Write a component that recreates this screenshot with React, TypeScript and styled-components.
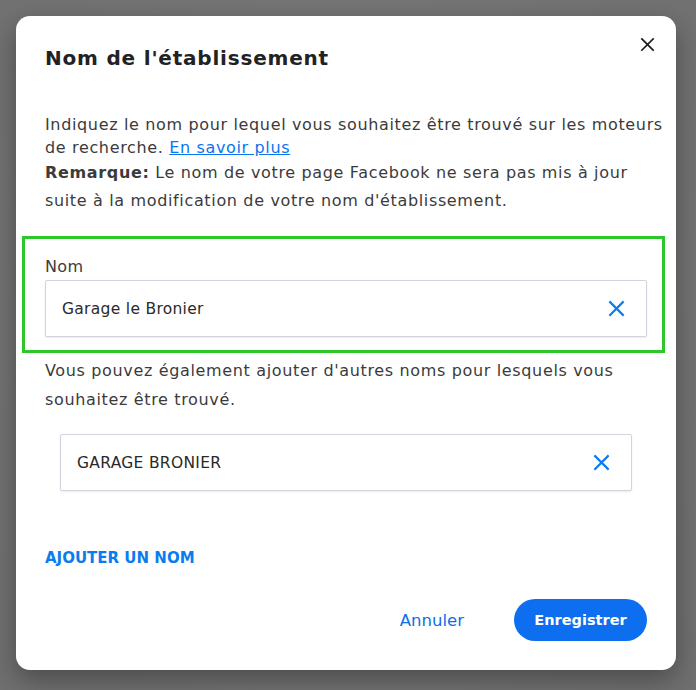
import React from 'react'
import styled, { createGlobalStyle } from 'styled-components'

const GlobalStyle = createGlobalStyle`
  html, body {
    margin: 0;
    padding: 0;
    background: #767676;
    font-family: "DejaVu Sans", "Open Sans", sans-serif;
  }
  * { box-sizing: border-box; }
`

const Overlay = styled.div`
  width: 696px;
  height: 690px;
  padding: 16px;
  background: radial-gradient(ellipse at 50% 40%, #7a7a7a 0%, #707070 100%);
`

const Dialog = styled.div`
  width: 660px;
  height: 654px;
  background: #fff;
  border-radius: 14px;
  box-shadow: 0 10px 28px rgba(0, 0, 0, 0.35);
  padding: 27px 29px 29px;
  display: flex;
  flex-direction: column;
`

const Header = styled.div`
  display: flex;
  align-items: center;
  justify-content: space-between;
  height: 30px;
`

const Title = styled.h2`
  margin: 0;
  font-size: 20px;
  font-weight: 700;
  color: #222;
  letter-spacing: 0.8px;
`

const IconButton = styled.button`
  border: none;
  background: none;
  padding: 0;
  margin-right: -12px;
  margin-top: -28px;
  width: 24px;
  height: 24px;
  display: flex;
  align-items: center;
  justify-content: center;
  cursor: pointer;
`

const Text = styled.p<{ $lh: number; $mt?: number }>`
  margin: ${(p) => p.$mt ?? 0}px 0 0;
  font-size: 16px;
  letter-spacing: 0.65px;
  line-height: ${(p) => p.$lh}px;
  color: #3b3b3b;
  white-space: nowrap;
`

const Link = styled.a`
  color: #0a74ee;
  text-decoration: underline;
`

const Highlight = styled.section`
  margin: 21px -18px 0 -23px;
  padding: 18px 15px 13px 20px;
  border: 3px solid #2bc72b;
`

const Label = styled.div`
  font-size: 16px;
  letter-spacing: 0.4px;
  line-height: 20px;
  color: #3b3b3b;
  margin-bottom: 3px;
`

const Field = styled.div<{ $inset?: boolean }>`
  height: 57px;
  margin: ${(p) => (p.$inset ? '20px 15px 0' : '0')};
  border: 1px solid #d3d3de;
  border-radius: 2px;
  box-shadow: 0 1px 2px rgba(0, 0, 0, 0.08);
  display: flex;
  align-items: center;
  padding: 0 21px 0 16px;
  background: #fff;
`

const FieldValue = styled.span`
  flex: 1;
  font-size: 15.5px;
  letter-spacing: 0.3px;
  color: #2a2a2a;
`

const AddLink = styled.button`
  align-self: flex-start;
  margin-top: 58px;
  border: none;
  background: none;
  padding: 0;
  font-family: inherit;
  font-size: 15px;
  font-weight: 700;
  color: #0a7cf0;
  cursor: pointer;
`

const Footer = styled.div`
  margin-top: auto;
  display: flex;
  justify-content: flex-end;
  align-items: center;
  gap: 50px;
`

const TextButton = styled.button`
  border: none;
  background: none;
  padding: 0;
  font-family: inherit;
  font-size: 16.5px;
  color: #0a6fe8;
  cursor: pointer;
`

const PrimaryButton = styled.button`
  border: none;
  height: 42px;
  width: 133px;
  padding: 0;
  border-radius: 21px;
  background: #0d6ef0;
  color: #fff;
  font-family: inherit;
  font-size: 14.5px;
  font-weight: 700;
  cursor: pointer;
`

const Cross: React.FC<{ size: number; color: string; width?: number }> = ({ size, color, width = 2 }) => (
  <svg width={size} height={size} viewBox="0 0 16 16" fill="none">
    <path d="M2 2L14 14M14 2L2 14" stroke={color} strokeWidth={width} strokeLinecap="square" />
  </svg>
)

const App: React.FC = () => {
  return (
    <>
      <GlobalStyle />
      <Overlay>
        <Dialog>
          <Header>
            <Title>Nom de l'établissement</Title>
            <IconButton aria-label="Fermer">
              <Cross size={15} color="#1c1c1c" width={1.8} />
            </IconButton>
          </Header>
          <Text $lh={23} $mt={40}>
            Indiquez le nom pour lequel vous souhaitez être trouvé sur les moteurs
            <br />
            de recherche. <Link href="#">En savoir plus</Link>
          </Text>
          <Text $lh={28}>
            <strong>Remarque:</strong> Le nom de votre page Facebook ne sera pas mis à jour
            <br />
            suite à la modification de votre nom d'établissement.
          </Text>
          <Highlight>
            <Label>Nom</Label>
            <Field>
              <FieldValue>Garage le Bronier</FieldValue>
              <Cross size={17} color="#0a7cf0" />
            </Field>
          </Highlight>
          <Text $lh={29} $mt={3}>
            Vous pouvez également ajouter d'autres noms pour lesquels vous
            <br />
            souhaitez être trouvé.
          </Text>
          <Field $inset>
            <FieldValue>GARAGE BRONIER</FieldValue>
            <Cross size={17} color="#0a7cf0" />
          </Field>
          <AddLink>AJOUTER UN NOM</AddLink>
          <Footer>
            <TextButton>Annuler</TextButton>
            <PrimaryButton>Enregistrer</PrimaryButton>
          </Footer>
        </Dialog>
      </Overlay>
    </>
  )
}

export default App
